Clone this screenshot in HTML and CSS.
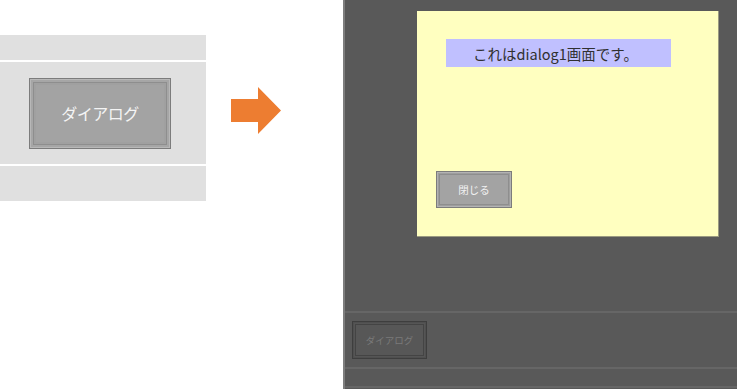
FILE: index.html
```html
<!DOCTYPE html>
<html lang="ja">
<head>
<meta charset="utf-8">
<link rel="stylesheet" href="styles.css">
</head>
<body>
<div class="page">
  <div class="left">
    <div class="band band-top"></div>
    <div class="band band-mid">
      <div class="btn btn-big"><span>ダイアログ</span></div>
    </div>
    <div class="band band-bot"></div>
  </div>
  <div class="arrow-area">
    <svg class="arrow" width="51" height="47" viewBox="0 0 51 47">
      <polygon points="0,12 27,12 27,0 50,23.5 27,47 27,35 0,35" fill="#ED7D31"/>
    </svg>
  </div>
  <div class="right">
    <div class="dialog">
      <div class="label">これはdialog1画面です。</div>
      <div class="btn btn-close"><span>閉じる</span></div>
    </div>
    <div class="divider first"></div>
    <div class="row">
      <div class="btn btn-dark"><span>ダイアログ</span></div>
    </div>
    <div class="divider"></div>
    <div class="row-bot"></div>
    <div class="divider"></div>
  </div>
</div>
</body>
</html>
```
FILE: styles.css
```css
html, body {
  margin: 0;
  padding: 0;
  background: #ffffff;
}
body {
  width: 737px;
  height: 389px;
  overflow: hidden;
  font-family: "Noto Sans CJK JP", "Noto Sans", sans-serif;
}
.page {
  display: flex;
  height: 389px;
}
.left {
  width: 206px;
  margin-top: 35px;
  display: flex;
  flex-direction: column;
  align-self: flex-start;
}
.band {
  background: #e0e0e0;
}
.band-top {
  height: 25px;
  border-bottom: 2px solid #ffffff;
}
.band-mid {
  height: 102px;
  display: flex;
  align-items: center;
  padding-left: 29px;
  border-bottom: 2px solid #ffffff;
}
.band-bot {
  height: 35px;
}
.btn {
  box-sizing: border-box;
  display: flex;
  align-items: center;
  justify-content: center;
  border: 1px solid #7c7c7c;
}
.btn-big {
  width: 142px;
  height: 71px;
  background: #a3a3a3;
  box-shadow: inset 0 0 0 1px #b8b8b8, inset 0 0 0 3px #a6a6a6, inset 0 0 0 4px #8e8e8e, inset 0 0 0 6px #a0a0a0;
  color: #f4f4f4;
  font-size: 16px;
  letter-spacing: -0.5px;
}
.arrow-area {
  width: 137px;
  padding-left: 25px;
  box-sizing: border-box;
}
.arrow {
  display: block;
  margin-top: 87px;
}
.right {
  flex: 1;
  background: #595959;
  border-left: 2px solid #7e7e7e;
  display: flex;
  flex-direction: column;
  padding-top: 11px;
}
.dialog {
  box-sizing: border-box;
  margin-left: 72px;
  width: 302px;
  height: 226px;
  background: #ffffc0;
  border-right: 1px solid #9a9a80;
  border-bottom: 1px solid #9a9a80;
  padding-top: 28px;
  padding-left: 29px;
  display: flex;
  flex-direction: column;
  align-items: flex-start;
}
.label {
  width: 225px;
  height: 28px;
  background: #c0c0ff;
  display: flex;
  align-items: center;
  justify-content: center;
  padding-right: 6px;
  box-sizing: border-box;
  font-size: 14.5px;
  color: #303030;
}
.btn-close {
  margin-top: 104px;
  margin-left: -10px;
  width: 76px;
  height: 37px;
  background: #a3a3a3;
  box-shadow: inset 0 0 0 1px #b3b3b3, inset 0 0 0 2px #9d9d9d, inset 0 0 0 3px #8e8e8e;
  color: #f2f2f2;
  font-size: 10.5px;
}
.divider {
  height: 2px;
  background: #666666;
}
.divider.first {
  margin-top: 74px;
}
.row {
  height: 54px;
  padding-left: 7px;
  padding-top: 8px;
  box-sizing: border-box;
}
.btn-dark {
  width: 75px;
  height: 38px;
  border-color: #3e3e3e;
  background: #575757;
  box-shadow: inset 0 0 0 1px #4f4f4f, inset 0 0 0 2px #555555, inset 0 0 0 3px #444444;
  color: #7a7a7a;
  font-size: 9.5px;
}
.row-bot {
  height: 17px;
}
```
